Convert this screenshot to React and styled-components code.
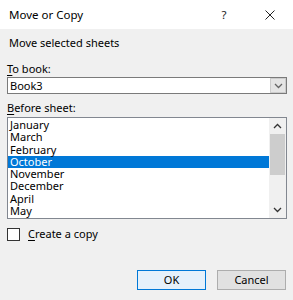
import React from "react";
import styled, { createGlobalStyle } from "styled-components";

const GlobalStyle = createGlobalStyle`
  html, body {
    margin: 0;
    padding: 0;
    background: #f0f0f0;
  }
  body {
    font-family: "Noto Sans", "Open Sans", sans-serif;
    font-size: 11px;
    color: #000;
  }
`;

const months = ["January", "March", "February", "October", "November", "December", "April", "May"];

const Chevron = ({ up, color = "#333" }) => (
  <svg width="9" height="6" viewBox="0 0 9 6">
    <polyline
      points={up ? "1,5 4.5,1.5 8,5" : "1,1 4.5,4.5 8,1"}
      fill="none"
      stroke={color}
      strokeWidth="1.3"
    />
  </svg>
);

const App = () => {
  return (
    <>
      <GlobalStyle />
      <Dialog>
        <TitleBar>
          <Title>Move or Copy</Title>
          <TitleButtons>
            <Help>?</Help>
            <Close>
              <svg width="10" height="10" viewBox="0 0 10 10">
                <path d="M0.5 0.5 L9.5 9.5 M9.5 0.5 L0.5 9.5" stroke="#222" strokeWidth="1" />
              </svg>
            </Close>
          </TitleButtons>
        </TitleBar>
        <Body>
          <Caption>Move selected sheets</Caption>
          <Label $top={10}>
            <u>T</u>o book:
          </Label>
          <Combo>
            <ComboText>Book3</ComboText>
            <ComboButton>
              <Chevron color="#666" />
            </ComboButton>
          </Combo>
          <Label $top={6}>
            <u>B</u>efore sheet:
          </Label>
          <ListBox>
            <Items>
              {months.map((m) => (
                <Item key={m} $selected={m === "October"}>
                  {m}
                </Item>
              ))}
            </Items>
            <ScrollBar>
              <ArrowCell>
                <Chevron up />
              </ArrowCell>
              <Track>
                <Thumb />
              </Track>
              <ArrowCell>
                <Chevron />
              </ArrowCell>
            </ScrollBar>
          </ListBox>
          <CheckRow>
            <CheckBox />
            <span>
              <u>C</u>reate a copy
            </span>
          </CheckRow>
          <Buttons>
            <Button $primary>OK</Button>
            <Button>Cancel</Button>
          </Buttons>
        </Body>
      </Dialog>
    </>
  );
};

const Dialog = styled.div`
  width: 293px;
  height: 300px;
  display: flex;
  flex-direction: column;
  background: #f0f0f0;
  overflow: hidden;
`;

const TitleBar = styled.div`
  height: 29px;
  background: #fff;
  display: flex;
  align-items: center;
  justify-content: space-between;
  padding-left: 9px;
`;

const Title = styled.div`
  font-size: 11.5px;
  color: #000;
`;

const TitleButtons = styled.div`
  display: flex;
  align-items: center;
  height: 100%;
`;

const Help = styled.div`
  width: 46px;
  text-align: center;
  font-size: 11.5px;
  color: #222;
`;

const Close = styled.div`
  width: 46px;
  display: flex;
  justify-content: center;
  align-items: center;
`;

const Body = styled.div`
  flex: 1;
  padding: 0 6px 0 7px;
  display: flex;
  flex-direction: column;
`;

const Caption = styled.div`
  margin-top: 6px;
  margin-left: 2px;
  line-height: 16px;
`;

const Label = styled.div`
  margin-top: ${(p) => p.$top}px;
  line-height: 16px;
  u {
    text-decoration-thickness: 1px;
    text-underline-offset: 2px;
  }
`;

const Combo = styled.div`
  height: 15px;
  border: 1px solid #7a7a7a;
  background: #fff;
  display: flex;
  align-items: center;
`;

const ComboText = styled.div`
  flex: 1;
  padding-left: 2px;
  line-height: 15px;
`;

const ComboButton = styled.div`
  width: 16px;
  height: 15px;
  background: #e5e5e5;
  border: 1px solid #cccccc;
  box-sizing: border-box;
  display: flex;
  align-items: center;
  justify-content: center;
`;

const ListBox = styled.div`
  margin-top: 1px;
  height: 100px;
  border: 1px solid #828790;
  background: #fff;
  display: flex;
`;

const Items = styled.div`
  flex: 1;
  padding-top: 1px;
`;

const Item = styled.div`
  height: 12.3px;
  line-height: 12.3px;
  padding-left: 2px;
  background: ${(p) => (p.$selected ? "#0078d7" : "transparent")};
  color: ${(p) => (p.$selected ? "#fff" : "#000")};
`;

const ScrollBar = styled.div`
  width: 17px;
  background: #f0f0f0;
  display: flex;
  flex-direction: column;
`;

const ArrowCell = styled.div`
  height: 16px;
  display: flex;
  align-items: center;
  justify-content: center;
`;

const Track = styled.div`
  flex: 1;
  padding: 0 1px;
`;

const Thumb = styled.div`
  height: 41px;
  background: #cdcdcd;
`;

const CheckRow = styled.div`
  margin-top: 7px;
  display: flex;
  align-items: center;
  gap: 8px;
  line-height: 16px;
  u {
    text-underline-offset: 2px;
  }
`;

const CheckBox = styled.div`
  width: 11px;
  height: 11px;
  border: 1px solid #333;
  background: #fff;
`;

const Buttons = styled.div`
  margin-top: 28px;
  display: flex;
  justify-content: flex-end;
  gap: 11px;
  padding-right: 1px;
`;

const Button = styled.div`
  width: 67px;
  height: 18px;
  line-height: 18px;
  text-align: center;
  background: ${(p) => (p.$primary ? "#e5f1fb" : "#e1e1e1")};
  border: 1px solid ${(p) => (p.$primary ? "#0078d7" : "#adadad")};
`;

export default App;
